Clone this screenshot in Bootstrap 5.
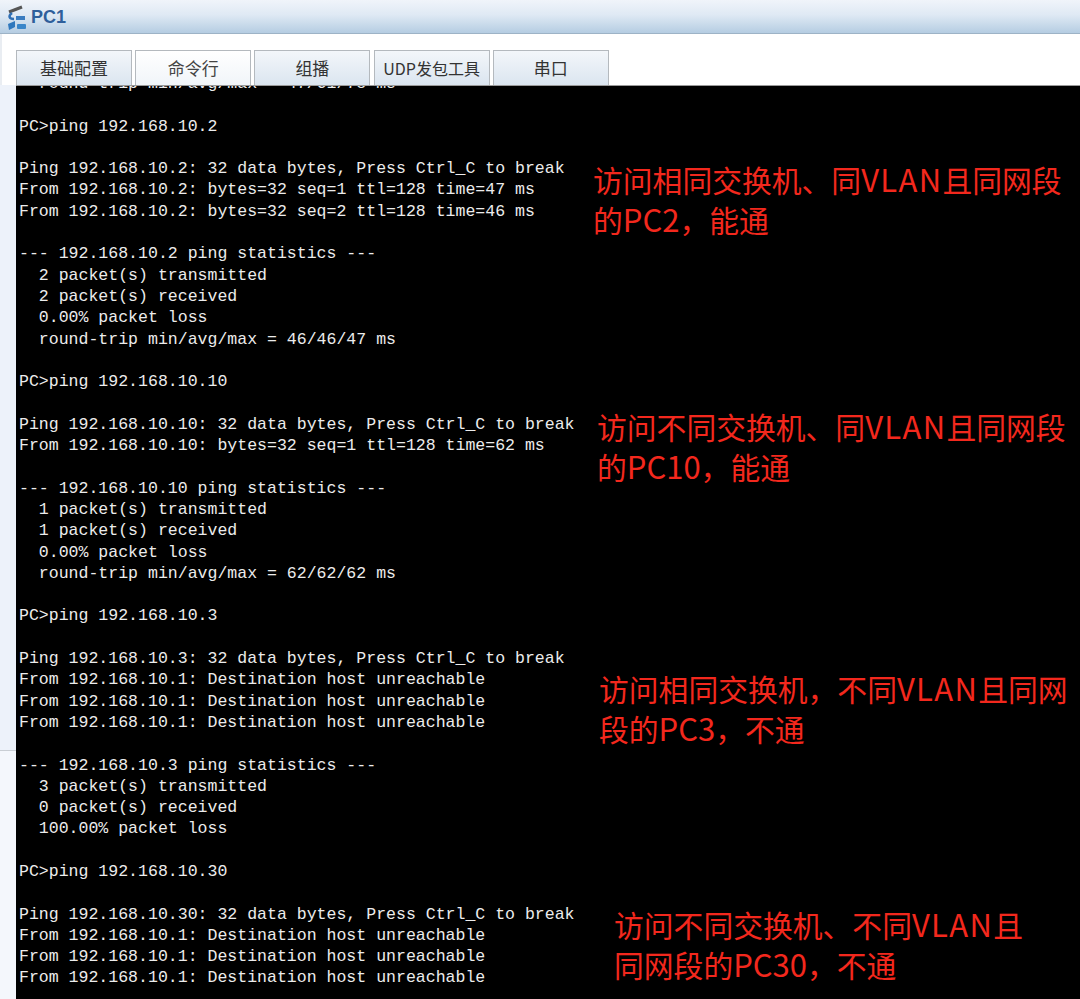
<!DOCTYPE html>
<html lang="zh">
<head>
<meta charset="utf-8">
<title>PC1</title>
<link href="https://cdn.jsdelivr.net/npm/bootstrap@5.3.0/dist/css/bootstrap.min.css" rel="stylesheet">
<style>
html,body{height:100%;}
body{margin:0;overflow:hidden;background:#fff;font-family:"Liberation Sans","Noto Sans CJK SC",sans-serif;}
.shot{width:1080px;height:999px;position:relative;overflow:hidden;background:#fff;}
.titlebar{height:34px;background:linear-gradient(#f0f4fa 0%,#dfe9f4 45%,#b5cde2 100%);border-bottom:1px solid #9db3c6;padding-left:6px;gap:4px;}
.titlebar span{font-size:18px;font-weight:700;color:#2f5f9b;line-height:1;}
.sidestrip{position:absolute;left:0;top:85px;width:16px;height:665px;background:#edf2fa;}
.stripend{position:absolute;left:0;top:750px;width:16px;height:249px;background:#f4f7fc;border-top:1px solid #c9ced4;}
.workarea{padding:16px 0 0 14px;border-left:2px solid #e9edf2;}
.tabrow{gap:3.2px;height:36px;border-bottom:1px solid #9a9a9a;}
.tabbtn{width:116px;height:35px;border:1px solid #b4b9be;border-bottom:0;background:linear-gradient(#f3f6fa,#dbe5f0);color:#333;font-size:17px;line-height:34px;text-align:center;font-family:"Noto Sans CJK SC",sans-serif;padding:0;}
.tabbtn.sel{background:linear-gradient(#fff,#f1f5f9);color:#444;}
.tabbtn.tight{font-size:16px;}
.console{background:#000;height:913px;padding-left:3px;overflow:hidden;position:relative;}
.console pre{margin:-13px 0 0 0;color:#ececec;font-family:"Liberation Mono",monospace;font-size:16.55px;line-height:21.3px;overflow:hidden;}
.note{position:absolute;color:#f3281d;font-family:"Noto Sans CJK SC",sans-serif;font-size:29.8px;line-height:40px;margin:0;white-space:nowrap;}
.lat{font-size:31px;line-height:1;}
.vl{letter-spacing:1.3px;}
.n1{left:593px;top:159px;}
.n2{left:597px;top:406px;}
.n3{left:599px;top:668px;}
.n4{left:614px;top:904px;}
</style>
</head>
<body>
<div class="shot">
  <div class="titlebar d-flex align-items-center">
    <svg width="21" height="26" viewBox="0 0 21 26" aria-hidden="true">
      <path d="M3 8 L16 3" stroke="#555" stroke-width="3" fill="none"/>
      <path d="M6 9 C2 12 3 15 8 15" stroke="#2f6fb5" stroke-width="2.5" fill="none"/>
      <rect x="10" y="12" width="9" height="4" fill="#3a7cc0"/>
      <path d="M2 20 L9 17 L9 23 L3 26 Z" fill="#2f78bd"/>
      <rect x="11" y="20" width="9" height="5" rx="1" fill="#3a86c9"/>
    </svg>
    <span>PC1</span>
  </div>
  <div class="sidestrip"></div>
  <div class="stripend"></div>
  <div class="workarea">
    <div class="tabrow d-flex">
      <div class="tabbtn">基础配置</div>
      <div class="tabbtn sel">命令行</div>
      <div class="tabbtn">组播</div>
      <div class="tabbtn tight">UDP发包工具</div>
      <div class="tabbtn">串口</div>
    </div>
    <div class="console"><pre>  round-trip min/avg/max = 47/61/78 ms

PC&gt;ping 192.168.10.2

Ping 192.168.10.2: 32 data bytes, Press Ctrl_C to break
From 192.168.10.2: bytes=32 seq=1 ttl=128 time=47 ms
From 192.168.10.2: bytes=32 seq=2 ttl=128 time=46 ms

--- 192.168.10.2 ping statistics ---
  2 packet(s) transmitted
  2 packet(s) received
  0.00% packet loss
  round-trip min/avg/max = 46/46/47 ms

PC&gt;ping 192.168.10.10

Ping 192.168.10.10: 32 data bytes, Press Ctrl_C to break
From 192.168.10.10: bytes=32 seq=1 ttl=128 time=62 ms

--- 192.168.10.10 ping statistics ---
  1 packet(s) transmitted
  1 packet(s) received
  0.00% packet loss
  round-trip min/avg/max = 62/62/62 ms

PC&gt;ping 192.168.10.3

Ping 192.168.10.3: 32 data bytes, Press Ctrl_C to break
From 192.168.10.1: Destination host unreachable
From 192.168.10.1: Destination host unreachable
From 192.168.10.1: Destination host unreachable

--- 192.168.10.3 ping statistics ---
  3 packet(s) transmitted
  0 packet(s) received
  100.00% packet loss

PC&gt;ping 192.168.10.30

Ping 192.168.10.30: 32 data bytes, Press Ctrl_C to break
From 192.168.10.1: Destination host unreachable
From 192.168.10.1: Destination host unreachable
From 192.168.10.1: Destination host unreachable</pre></div>
  </div>
  <p class="note n1">访问相同交换机、同<span class="lat vl">VLAN</span>且同网段<br>的<span class="lat">PC2</span>，能通</p>
  <p class="note n2">访问不同交换机、同<span class="lat vl">VLAN</span>且同网段<br>的<span class="lat">PC10</span>，能通</p>
  <p class="note n3">访问相同交换机，不同<span class="lat vl">VLAN</span>且同网<br>段的<span class="lat">PC3</span>，不通</p>
  <p class="note n4">访问不同交换机、不同<span class="lat vl">VLAN</span>且<br>同网段的<span class="lat">PC30</span>，不通</p>
</div>
<script src="https://cdn.jsdelivr.net/npm/bootstrap@5.3.0/dist/js/bootstrap.bundle.min.js"></script>
</body>
</html>
